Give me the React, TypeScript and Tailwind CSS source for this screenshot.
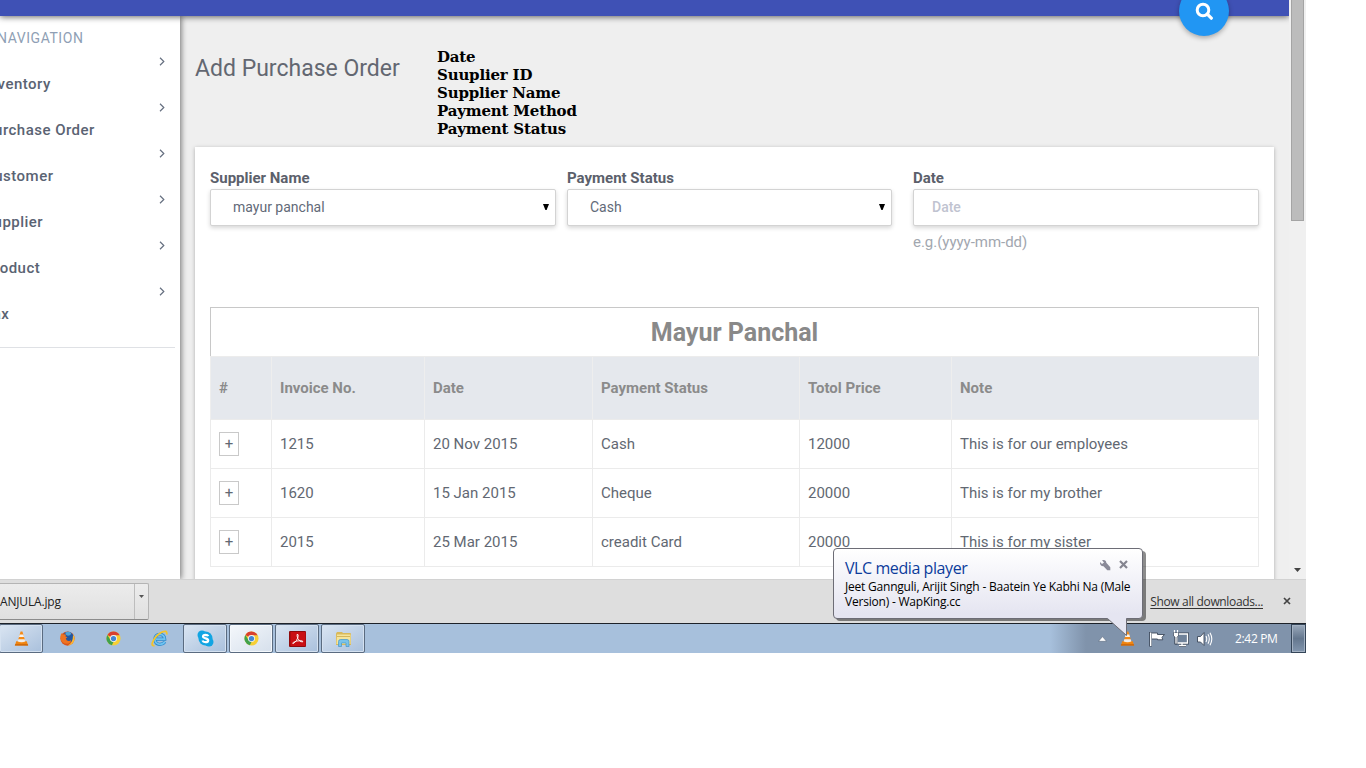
import type { ReactNode } from "react";

const NAV = ["Inventory", "Purchase Order", "Customer", "Supplier", "Product", "Tax"];

const ROWS = [
  ["1215", "20 Nov 2015", "Cash", "12000", "This is for our employees"],
  ["1620", "15 Jan 2015", "Cheque", "20000", "This is for my brother"],
  ["2015", "25 Mar 2015", "creadit Card", "20000", "This is for my sister"],
];

const HEADS = ["#", "Invoice No.", "Date", "Payment Status", "Totol Price", "Note"];

const GRID = "grid grid-cols-[61px_153px_168px_207px_152px_308px]";

function Chevron() {
  return (
    <svg width="6" height="9" viewBox="0 0 6 9" className="shrink-0">
      <path d="M1 0.8 4.8 4.5 1 8.2" fill="none" stroke="#667080" strokeWidth="1.2" />
    </svg>
  );
}

function Sidebar() {
  return (
    <aside className="relative z-10 w-[180px] shrink-0 bg-white shadow-[1px_0_6px_rgba(0,0,0,0.55)]">
      <div className="h-full overflow-hidden pt-3">
        <div className="-ml-[3px] h-5 text-[14px] leading-5 tracking-[0.55px] whitespace-nowrap text-[#8f9fb5]">NAVIGATION</div>
        <ul>
          {NAV.map((n) => (
            <li key={n} className="flex h-[46px] flex-col">
              <div className="flex h-[26px] items-center justify-end pr-[15px]">
                <Chevron />
              </div>
              <div className="-ml-[16px] h-5 text-[15px] leading-5 font-medium tracking-[0.48px] whitespace-nowrap text-[#5a6373]">{n}</div>
            </li>
          ))}
        </ul>
        <div className="mt-[23px] mr-[5px] h-px bg-[#dfe1e5]" />
      </div>
    </aside>
  );
}

function Select({ label, value, className }: { label: string; value: string; className: string }) {
  return (
    <div className={className}>
      <Label>{label}</Label>
      <div className="flex h-[37px] items-center justify-between rounded-[2px] border border-[#d3d3d3] bg-white pr-[6px] pl-[22px] text-[14px] text-[#626a78] shadow-[0_2px_4px_rgba(0,0,0,0.16)]">
        <span>{value}</span>
        <svg width="6" height="6" viewBox="0 0 6 6" className="-translate-y-px">
          <path d="M0 0h6L3.6 6H2.4z" fill="#000" />
        </svg>
      </div>
    </div>
  );
}

function Label({ children }: { children: ReactNode }) {
  return <div className="h-[22px] text-[15px] leading-[22px] font-bold text-[#5b606b]">{children}</div>;
}

function Orders() {
  return (
    <div className="mt-[55px] w-[1049px] text-[15px]">
      <div className="h-[49px] border border-b-0 border-[#c8c8c8] text-center text-[25px] leading-[49px] font-bold text-[#898989]">
        Mayur Panchal
      </div>
      <div className={`${GRID} h-[63px] border-t border-[#ececec] bg-[#e5e8ed] font-bold text-[#8b8b8b]`}>
        {HEADS.map((h) => (
          <div key={h} className="flex items-center border-l border-[#eeeeee] pl-2">
            {h}
          </div>
        ))}
      </div>
      {ROWS.map((r) => (
        <div key={r[0]} className={`${GRID} h-[49px] border-t border-[#ebebeb] text-[#626872]`}>
          <div className="flex items-center border-l border-[#ebebeb] pl-2">
            <span className="flex h-6 w-5 items-center justify-center border border-[#c9c9c9] text-[15px] leading-none">+</span>
          </div>
          {r.map((c, i) => (
            <div key={i} className="flex items-center border-l border-[#ebebeb] pl-2 last:border-r">
              {c}
            </div>
          ))}
        </div>
      ))}
      <div className="h-px bg-[#ebebeb]" />
    </div>
  );
}

function Main() {
  return (
    <main className="flex-1 overflow-hidden bg-[#efefef]">
      <div className="flex h-[131px] pl-[15px]">
        <h1 className="w-[242px] pt-[37px] text-[23px] leading-8 whitespace-nowrap text-[#636771]">Add Purchase Order</h1>
        <div className="pt-8 font-['DejaVu_Serif',serif] text-[15px] leading-[18px] font-bold tracking-[-0.18px] whitespace-nowrap text-black">
          <div>Date</div>
          <div>Suuplier ID</div>
          <div>Supplier Name</div>
          <div>Payment Method</div>
          <div>Payment Status</div>
        </div>
      </div>
      <div className="ml-[15px] h-[500px] w-[1079px] bg-white px-[15px] pt-5 shadow-[0_1px_4px_rgba(0,0,0,0.28)]">
        <div className="flex h-[85px]">
          <Select label="Supplier Name" value="mayur panchal" className="w-[346px]" />
          <Select label="Payment Status" value="Cash" className="ml-[11px] w-[325px]" />
          <div className="ml-[21px] w-[346px]">
            <Label>Date</Label>
            <div className="flex h-[37px] items-center rounded-[2px] border border-[#d3d3d3] bg-white pl-[18px] text-[14px] font-medium text-[#c0c3d0] shadow-[0_2px_4px_rgba(0,0,0,0.16)]">
              Date
            </div>
            <div className="mt-[6px] text-[15px] leading-5 tracking-[-0.02px] text-[#a2a7af]">e.g.(yyyy-mm-dd)</div>
          </div>
        </div>
        <Orders />
      </div>
    </main>
  );
}

function Cone({ size }: { size: number }) {
  return (
    <svg width={size} height={size} viewBox="0 0 16 16">
      <path d="M2.4 11h11.2l1.4 4.5H1z" fill="#ee8410" />
      <path d="M1.2 14.2h13.6l.3 1.3H.9z" fill="#c86207" />
      <path d="M7 .5h2L12.3 12q-4.3 2-8.6 0z" fill="#f58a16" />
      <path d="M6.1 3.7h3.8l.8 2.7H5.3z" fill="#f5f3ef" />
      <path d="M4.6 8.8h6.8l.7 2.3q-4 1.6-8.2 0z" fill="#f1ede8" />
    </svg>
  );
}

function Firefox() {
  return (
    <svg width="15" height="15" viewBox="0 0 16 16">
      <circle cx="8" cy="8" r="7.6" fill="#d9531b" />
      <path d="M4 3.200Q7-.4 11.500 1.500 15.600 4 14.300 9 12.500 12.500 9 11.500 6 10 6.300 7z" fill="#24579f" />
      <path d="M5.500 1.800Q9-.2 12 2.200 11.500 5 8.500 5 6 4.500 5.500 1.800z" fill="#4fa3d8" />
      <path d="M1.200 2.300 3.300 3.900q1.800-.8 3.300.2L5.600 5.700l2.300 1-1.900 1.200q.5 2.700 3.300 2.700 1.700-.2 2.700-1.400-.8 4-4.300 4.500Q1.800 13.200.6 8.500q-.3-3.500.6-6.200z" fill="#ee7421" />
      <path d="M13.800 3.500q3 4.200.8 8.200-2.300 3.800-6.400 3.700 6.200-2.600 5.600-11.900z" fill="#f9ba36" />
    </svg>
  );
}

function Chrome() {
  return (
    <svg width="15" height="15" viewBox="0 0 16 16">
      <circle cx="8" cy="8" r="7.5" fill="#f6cf36" />
      <path d="M8 8 1.500 4.250A7.500 7.500 0 0 1 14.500 4.500L8 4.500z" fill="#d9402f" />
      <path d="M1.500 4.250 5 10l3 1.500-1.700 3.800A7.500 7.500 0 0 1 1.500 4.250z" fill="#3fa14c" />
      <circle cx="8" cy="8" r="3.7" fill="#f4f6f8" />
      <circle cx="8" cy="8" r="2.8" fill="#4486d3" />
    </svg>
  );
}

function Explorer() {
  return (
    <svg width="17" height="17" viewBox="0 0 17 17">
      <path d="M13.800 11.800Q12.300 14.300 8.800 14.300 4.200 14 3.800 9.300 4.200 4.500 8.800 4.300q4.700.3 4.900 4.900H5" fill="none" stroke="#2b88cc" strokeWidth="3.2" />
      <path d="M13.800 11.800Q12.300 14.300 8.800 14.300 4.200 14 3.800 9.300 4.200 4.500 8.800 4.300q4.700.3 4.900 4.900H5" fill="none" stroke="#6fc3f0" strokeWidth="1.7" />
      <path d="M3.500 15.500Q.2 16.200 1.500 12.500 4 6 10.500 2.300 16.500-.5 15.700 4.500" fill="none" stroke="#f3c42c" strokeWidth="1.8" />
    </svg>
  );
}

function Skype() {
  return (
    <svg width="17" height="17" viewBox="0 0 17 17">
      <circle cx="5" cy="5" r="4.5" fill="#12a5e3" />
      <circle cx="12" cy="12" r="4.5" fill="#12a5e3" />
      <circle cx="8.5" cy="8.5" r="7" fill="#12a5e3" />
      <path d="M11.300 6.100Q10.700 4.800 8.500 4.800 6 4.900 6 6.500 6.100 7.800 8.600 8.300 11.300 8.800 11.200 10.500 11 12.200 8.500 12.200 6 12.100 5.500 10.500" fill="none" stroke="#fff" strokeWidth="2.2" />
    </svg>
  );
}

function Acrobat() {
  return (
    <svg width="17" height="16" viewBox="0 0 17 16">
      <rect width="17" height="16" rx="1" fill="#8f0a0c" />
      <rect x="1.5" y="1" width="15" height="14" fill="#c90f13" />
      <path d="M8.300 3Q9.800 3.300 8.900 6.500 7.800 10.200 4.500 12.500 3 12.800 4.300 11.400 7.500 9.500 12 9.700 14.700 10 13.500 11 11 11.300 8.800 7.500 7.600 4.500 8.300 3z" fill="none" stroke="#fff" strokeWidth="0.9" />
    </svg>
  );
}

function Folder() {
  return (
    <svg width="17" height="16" viewBox="0 0 17 16">
      <path d="M1 2.500 2 1h5l1 1h7q1 0 1 1v11H1z" fill="#d9b95a" />
      <path d="M2 3.500h13.500V13H1.500z" fill="#f5e59c" />
      <path d="M2 5.500h13" stroke="#d0b055" strokeWidth="0.9" />
      <path d="M3.500 15.500v-5q0-2 2-2h6.500q2 0 2 2v5h-3v-3.500H6.500v3.500z" fill="#79c3ea" stroke="#4596c8" strokeWidth="0.7" />
    </svg>
  );
}

function TaskButton({ children, open, active }: { children: ReactNode; open?: boolean; active?: boolean }) {
  const look = active
    ? "border-[#5a6b80] bg-linear-to-br from-[#f4f7fb] to-[#d6e0ec] shadow-[inset_0_0_0_1px_#f4f8fc]"
    : open
      ? "border-[#5a6b80] bg-linear-to-br from-[#dae5f2] to-[#a9c0dc] shadow-[inset_0_0_0_1px_#d4e1f0]"
      : "border-transparent";
  return <div className={`flex h-[29px] w-[44px] items-center justify-center rounded-[2px] border ${look}`}>{children}</div>;
}

function DownloadBar() {
  return (
    <div className="flex h-11 items-start justify-between border-t border-[#d2d2d2] bg-[#dedede] pr-[15px] font-['Open_Sans','Noto_Sans',sans-serif]">
      <div className="mt-[3px] -ml-1 flex h-[37px] w-[153px] rounded-[2px] border border-[#b4b4b4] border-b-[#8c8c8c] bg-linear-to-b from-[#ececec] to-[#e0e0e0]">
        <div className="flex-1 pl-[3px] text-[12px] leading-[35px] tracking-[-0.17px] whitespace-nowrap text-[#222]">ANJULA.jpg</div>
        <div className="w-[14px] border-l border-[#bdbdbd] pt-[11px] pl-[4px]">
          <svg width="5" height="3" viewBox="0 0 5 3">
            <path d="M0 0h5L2.500 3z" fill="#555" />
          </svg>
        </div>
      </div>
      <div className="flex h-[43px] items-center gap-[20px]">
        <span className="text-[12px] tracking-[-0.35px] whitespace-nowrap text-[#333] underline underline-offset-2">Show all downloads...</span>
        <svg width="8" height="8" viewBox="0 0 8 8" className="-translate-y-px">
          <path d="M1 1l6 6M7 1 1 7" stroke="#444" strokeWidth="1.7" />
        </svg>
      </div>
    </div>
  );
}

function Taskbar() {
  return (
    <div className="flex h-[30px] items-start justify-between border-t border-[#1d2229] bg-[#a7c0dc]">
      <div className="-ml-px flex gap-[2px]">
        <TaskButton open><Cone size={15} /></TaskButton>
        <TaskButton><Firefox /></TaskButton>
        <TaskButton><Chrome /></TaskButton>
        <TaskButton><Explorer /></TaskButton>
        <TaskButton open><Skype /></TaskButton>
        <TaskButton active><Chrome /></TaskButton>
        <TaskButton open><Acrobat /></TaskButton>
        <TaskButton open><Folder /></TaskButton>
      </div>
      <div className="flex h-[29px] w-[256px] items-center bg-linear-to-r from-[#a7c0dc] to-[#8093ab] to-[36px]">
        <svg className="ml-[48px]" width="9" height="6" viewBox="0 0 9 6">
          <path d="M.5 5.300 4.500.6 8.500 5.300z" fill="#fff" stroke="#4d5b6e" strokeWidth="0.5" />
        </svg>
        <span className="ml-[13px]"><Cone size={15} /></span>
        <svg className="ml-[14px]" width="17" height="16" viewBox="0 0 17 16">
          <path d="M1.500 1v14.500" stroke="#3c485a" strokeWidth="2.8" />
          <path d="M2.500 2h6v1.500h7l-2.500 2.800.8 2.500H8.500V8h-6z" fill="#fff" stroke="#3c485a" strokeWidth="0.9" />
          <path d="M1.700 1.500V15" stroke="#fff" strokeWidth="1.5" />
        </svg>
        <svg className="ml-[6px]" width="17" height="17" viewBox="0 0 17 17">
          <path d="M4 4h11.500v9H4zM7 15.500h7M10 13v2.500" fill="none" stroke="#3c485a" strokeWidth="3" />
          <path d="M5 4h10.500v9H5zM7 15.500h7M10 13v2.500" fill="#6f829a" stroke="#fff" strokeWidth="1.3" />
          <path d="M1.500 2.500h5v3.500l-1.500 1v7H3V7L1.500 6z" fill="#fff" stroke="#3c485a" strokeWidth="0.7" />
          <path d="M2.500 0v2.500M5.500 0v2.500" stroke="#fff" strokeWidth="1.2" />
        </svg>
        <svg className="ml-[7px]" width="17" height="16" viewBox="0 0 17 16">
          <path d="M1.500 5.500h3L8 1.500v13L4.500 11h-3z" fill="#fff" stroke="#3c485a" strokeWidth="0.9" />
          <path d="M10 5q1.500 3 0 6M12 3.300q2.600 4.700 0 9.400M14 1.800q3.600 6.200 0 12.400" fill="none" stroke="#fff" strokeWidth="1.1" />
        </svg>
        <span className="ml-[22px] font-['Open_Sans','Noto_Sans',sans-serif] text-[12px] tracking-[-0.33px] whitespace-nowrap text-white">2:42 PM</span>
        <div className="ml-auto h-[29px] w-[15px] shrink-0 border border-[#344558] bg-linear-to-b from-[#9aa9bb] via-[#64778e] to-[#8296ae] shadow-[inset_0_0_0_1px_#a3b1c2]" />
      </div>
    </div>
  );
}

function Balloon() {
  return (
    <div className="absolute top-[547px] left-[833px] z-30 h-[90px] w-[316px] font-['Open_Sans','Noto_Sans',sans-serif]">
      <svg className="absolute inset-0" width="316" height="90" viewBox="0 0 316 90">
        <defs>
          <linearGradient id="balloon" x1="0" y1="0" x2="0" y2="1">
            <stop offset="0" stopColor="#ffffff" />
            <stop offset="0.75" stopColor="#e5e5f1" />
          </linearGradient>
        </defs>
        <path d="M6 4H309q4 0 4 4v62q0 4-4 4H7q-4 0-4-4z" fill="#000" opacity="0.45" />
        <path d="M4 1.500H306q3.500 0 3.500 3.500v63q0 3.500-3.500 3.500H293.500V88.500L274.500 71.500H4Q.5 71.500.5 68V5Q.5 1.500 4 1.500z" fill="url(#balloon)" stroke="#6d6d76" />
      </svg>
      <div className="relative pt-[11px] pl-[12px]">
        <div className="flex h-5 w-[283px] items-center justify-between">
          <span className="text-[16px] tracking-[-0.42px] whitespace-nowrap text-[#0c3c9c]">VLC media player</span>
          <span className="flex items-center gap-[8px] pb-[7px]">
            <svg width="12" height="12" viewBox="0 0 12 12">
              <path d="M3 1.200q4-1 4.300 2.500l4 4.500v3H8.300L4.500 7.300Q.5 7 1 3l2 2 2-1.500z" fill="#8a8a98" />
            </svg>
            <svg width="9" height="9" viewBox="0 0 9 9">
              <path d="M1 1l7 7M8 1 1 8" stroke="#858590" strokeWidth="2.2" />
            </svg>
          </span>
        </div>
        <div className="mt-[1px] text-[12px] leading-[15px] tracking-[-0.21px] whitespace-nowrap text-black">
          <div>Jeet Gannguli, Arijit Singh - Baatein Ye Kabhi Na (Male</div>
          <div>Version) - WapKing.cc</div>
        </div>
      </div>
    </div>
  );
}

export default function App() {
  return (
    <div className="h-[768px] w-[1366px] overflow-hidden bg-white font-[Roboto,sans-serif]">
      <div className="relative flex h-[653px] w-[1306px] flex-col overflow-hidden">
        <div className="flex h-[579px]">
          <div className="relative flex w-[1289px] flex-col overflow-hidden">
            <header className="relative z-20 h-4 shrink-0 bg-[#3f51b5] shadow-[0_1px_6px_rgba(0,0,0,0.6)]" />
            <div className="flex min-h-0 flex-1">
              <Sidebar />
              <Main />
            </div>
            <button className="absolute -top-[14px] left-[1179px] z-20 flex size-[50px] items-center justify-center rounded-full bg-[#2196f3] shadow-[0_2px_5px_rgba(0,0,0,0.3)]">
              <svg width="18" height="18" viewBox="0 0 18 18">
                <circle cx="8" cy="8" r="5.8" fill="none" stroke="#fff" strokeWidth="3" />
                <path d="m12.300 12.200 4 4" stroke="#fff" strokeWidth="3.2" strokeLinecap="round" />
              </svg>
            </button>
          </div>
          <div className="flex w-[17px] flex-col justify-between bg-[#f0f0f0] px-[2px]">
            <div className="h-[221px] w-[13px] border border-t-0 border-[#a4a4a4] bg-[#bcbcbc]" />
            <svg className="mb-[7px] ml-[3px]" width="7" height="4" viewBox="0 0 7 4">
              <path d="M0 0h7L3.500 4z" fill="#444" />
            </svg>
          </div>
        </div>
        <DownloadBar />
        <Taskbar />
        <Balloon />
      </div>
    </div>
  );
}
